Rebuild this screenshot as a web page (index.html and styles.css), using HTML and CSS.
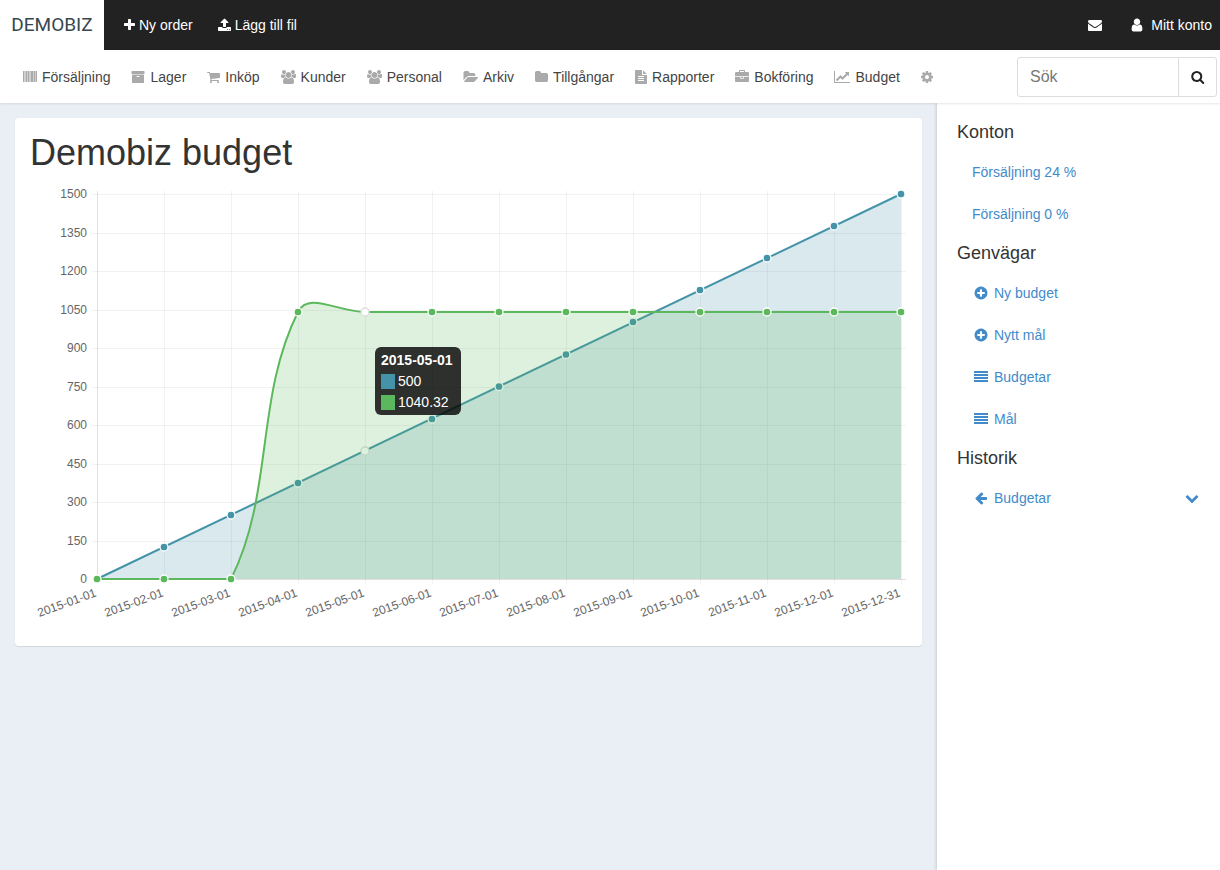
FILE: index.html
```html
<!DOCTYPE html>
<html lang="sv">
<head>
<meta charset="utf-8">
<meta name="viewport" content="width=device-width, initial-scale=1">
<title>Demobiz budget</title>
<link rel="stylesheet" href="styles.css">
</head>
<body>
<svg class="sprite" aria-hidden="true">
  <symbol id="plus" viewBox="192 0 1408 1792"><path d="M1600 736v192q0 40-28 68t-68 28h-416v416q0 40-28 68t-68 28h-192q-40 0-68-28t-28-68v-416h-416q-40 0-68-28t-28-68v-192q0-40 28-68t68-28h416v-416q0-40 28-68t68-28h192q40 0 68 28t28 68v416h416q40 0 68 28t28 68z"/></symbol>
  <symbol id="upload" viewBox="64 0 1664 1792"><path d="M1344 1472q0-26-19-45t-45-19-45 19-19 45 19 45 45 19 45-19 19-45zm256 0q0-26-19-45t-45-19-45 19-19 45 19 45 45 19 45-19 19-45zm128-224v320q0 40-28 68t-68 28h-1472q-40 0-68-28t-28-68v-320q0-40 28-68t68-28h427q21 56 70.5 92t110.5 36h256q61 0 110.5-36t70.5-92h427q40 0 68 28t28 68zm-325-648q-17 40-59 40h-256v448q0 26-19 45t-45 19h-256q-26 0-45-19t-19-45v-448h-256q-42 0-59-40-17-39 14-69l448-448q18-19 45-19t45 19l448 448q31 30 14 69z"/></symbol>
  <symbol id="envelope" viewBox="0 0 1792 1792"><path d="M1792 710v794q0 66-47 113t-113 47h-1472q-66 0-113-47t-47-113v-794q44 49 101 87 362 246 497 345 57 42 92.5 65.5t94.5 48 110 24.5h2q51 0 110-24.5t94.5-48 92.5-65.5q170-123 498-345 57-39 100-87zm0-294q0 79-49 151t-122 123q-376 261-468 325-10 7-42.5 31t-54 38.5-52 32.5-57.5 27-50 9h-2q-23 0-50-9t-57.5-27-52-32.5-54-38.5-42.5-31q-91-64-262-182.5t-205-142.5q-62-42-117-115.5t-55-136.5q0-78 41.5-130t118.5-52h1472q65 0 112.5 47t47.5 113z"/></symbol>
  <symbol id="user" viewBox="224 64 1344 1664"><path d="M1536 1399q0 109-62.5 187t-150.5 78h-854q-88 0-150.5-78t-62.5-187q0-85 8.5-160.5t31.5-152 58.5-131 94-89 134.5-34.5q131 128 313 128t313-128q76 0 134.5 34.5t94 89 58.5 131 31.5 152 8.5 160.5zm-256-887q0 159-112.5 271.5t-271.5 112.5-271.5-112.5-112.5-271.5 112.5-271.5 271.5-112.5 271.5 112.5 112.5 271.5z"/></symbol>
  <symbol id="search" viewBox="64 0 1728 1792"><path d="M1216 832q0-185-131.5-316.5t-316.5-131.5-316.5 131.5-131.5 316.5 131.5 316.5 316.5 131.5 316.5-131.5 131.5-316.5zm512 832q0 52-38 90t-90 38q-54 0-90-38l-343-342q-179 124-399 124-143 0-273.5-55.5t-225-150-150-225-55.5-273.5 55.5-273.5 150-225 225-150 273.5-55.5 273.5 55.5 225 150 150 225 55.5 273.5q0 220-124 399l343 343q37 37 37 90z"/></symbol>
  <symbol id="barcode" viewBox="0 0 14 14"><path fill-opacity=".55" d="M0 1h14v11H0z"/><path d="M0 1h1v11H0zM3 1h1v11H3zM5 1h1v11H5zM8 1h2v11H8zM11 1h1v11h-1zM13 1h1v11h-1z"/></symbol>
  <symbol id="archive" viewBox="64 0 1664 1792"><path d="M1088 832q0-26-19-45t-45-19h-256q-26 0-45 19t-19 45 19 45 45 19h256q26 0 45-19t19-45zm576-192v960q0 26-19 45t-45 19h-1408q-26 0-45-19t-19-45v-960q0-26 19-45t45-19h1408q26 0 45 19t19 45zm64-448v256q0 26-19 45t-45 19h-1536q-26 0-45-19t-19-45v-256q0-26 19-45t45-19h1536q26 0 45 19t19 45z"/></symbol>
  <symbol id="cart" viewBox="64 0 1664 1792"><path d="M704 1536q0 52-38 90t-90 38-90-38-38-90 38-90 90-38 90 38 38 90zm896 0q0 52-38 90t-90 38-90-38-38-90 38-90 90-38 90 38 38 90zm128-1088v512q0 24-16.5 42.5t-40.5 21.5l-1044 122q13 60 13 70 0 16-24 64h920q26 0 45 19t19 45-19 45-45 19h-1024q-26 0-45-19t-19-45q0-11 8-31.5t16-36 21.5-40 15.5-29.5l-177-823h-204q-26 0-45-19t-19-45 19-45 45-19h256q16 0 28.5 6.5t19.5 15.5 13 24.5 8 26 5.5 29.5 4.5 26h1201q26 0 45 19t19 45z"/></symbol>
  <symbol id="users" viewBox="-64 0 1920 1792"><path d="M529 896q-162 5-265 128h-134q-82 0-138-40.5t-56-118.5q0-353 124-353 6 0 43.5 21t97.5 42.5 119 21.5q67 0 133-23-5 37-5 66 0 159 90 289zm1071 637q0 120-73 189.5t-194 69.5h-874q-121 0-194-69.5t-73-189.5q0-53 3.5-103.5t14-109 26.5-108.5 43-97.5 62-81 85.5-53.5 111.5-20q10 0 43 21.5t73 48 107 48 135 21.5 135-21.5 107-48 73-48 43-21.5q61 0 111.5 20t85.5 53.5 62 81 43 97.5 26.5 108.5 14 109 3.5 103.5zm-1024-1277q0 106-75 181t-181 75-181-75-75-181 75-181 181-75 181 75 75 181zm704 384q0 159-112.5 271.5t-271.5 112.5-271.5-112.5-112.5-271.5 112.5-271.5 271.5-112.5 271.5 112.5 112.5 271.5zm576 225q0 78-56 118.5t-138 40.5h-134q-103-123-265-128 90-130 90-289 0-29-5-66 66 23 133 23 59 0 119-21.5t97.5-42.5 43.5-21q124 0 124 353zm-128-609q0 106-75 181t-181 75-181-75-75-181 75-181 181-75 181 75 75 181z"/></symbol>
  <symbol id="folder-open" viewBox="0 0 1943 1792"><path d="M1943 952q0 31-31 66l-336 396q-43 51-120.5 86.5t-143.5 35.5h-1088q-34 0-60.5-13t-26.5-43q0-31 31-66l336-396q43-51 120.5-86.5t143.5-35.5h1088q34 0 60.5 13t26.5 43zm-343-344v160h-832q-94 0-197 47.5t-164 119.5l-337 396-5 6q0-4-.5-12.5t-.5-12.5v-960q0-92 66-158t158-66h320q92 0 158 66t66 158v32h544q92 0 158 66t66 158z"/></symbol>
  <symbol id="folder" viewBox="64 0 1664 1792"><path d="M1728 608v704q0 92-66 158t-158 66h-1216q-92 0-158-66t-66-158v-960q0-92 66-158t158-66h320q92 0 158 66t66 158v32h672q92 0 158 66t66 158z"/></symbol>
  <symbol id="file" viewBox="128 0 1536 1792"><path d="M1596 476q14 14 28 36h-472v-472q22 14 36 28zm-476 164h544v1056q0 40-28 68t-68 28h-1344q-40 0-68-28t-28-68v-1600q0-40 28-68t68-28h800v544q0 40 28 68t68 28zm160 736v-64q0-14-9-23t-23-9h-704q-14 0-23 9t-9 23v64q0 14 9 23t23 9h704q14 0 23-9t9-23zm0-256v-64q0-14-9-23t-23-9h-704q-14 0-23 9t-9 23v64q0 14 9 23t23 9h704q14 0 23-9t9-23zm0-256v-64q0-14-9-23t-23-9h-704q-14 0-23 9t-9 23v64q0 14 9 23t23 9h704q14 0 23-9t9-23z"/></symbol>
  <symbol id="briefcase" viewBox="0 0 1792 1792"><path d="M640 256h512v-128h-512v128zm1152 640v480q0 66-47 113t-113 47h-1472q-66 0-113-47t-47-113v-480h672v160q0 26 19 45t45 19h320q26 0 45-19t19-45v-160h672zm-768 0v128h-256v-128h256zm768-480v384h-1792v-384q0-66 47-113t113-47h352v-160q0-40 28-68t68-28h576q40 0 68 28t28 68v160h352q66 0 113 47t47 113z"/></symbol>
  <symbol id="line-chart" viewBox="0 0 2048 1792"><path d="M2048 1536v128h-2048v-1536h128v1408h1920zm-128-1248v435q0 21-19.500 29.500t-35.500-7.500l-121-121-633 633q-10 10-23 10t-23-10l-233-233-416 416-192-192 585-585q10-10 23-10t23 10l233 233 464-464-121-121q-16-16-7.500-35.500t29.500-19.500h435q14 0 23 9t9 23z"/></symbol>
  <symbol id="cog" viewBox="128 64 1536 1664"><path d="M1152 896q0-106-75-181t-181-75-181 75-75 181 75 181 181 75 181-75 75-181zm512-109v222q0 12-8 23t-20 13l-185 28q-19 54-39 91 35 50 107 138 10 12 10 25t-9 23q-27 37-99 108t-94 71q-12 0-26-9l-138-108q-44 23-91 38-16 136-29 186-7 28-36 28h-222q-14 0-24.500-8.500t-11.500-21.500l-28-184q-49-16-90-37l-141 107q-10 9-25 9-14 0-25-11-126-114-165-168-7-10-7-23 0-12 8-23 15-21 51-66.500t54-70.500q-27-50-41-99l-183-27q-13-2-21-12.500t-8-23.500v-222q0-12 8-23t19-13l186-28q14-46 39-92-40-57-107-138-10-12-10-24 0-10 9-23 26-36 98.500-107.500t94.500-71.500q13 0 26 10l138 107q44-23 91-38 16-136 29-186 7-28 36-28h222q14 0 24.500 8.500t11.500 21.500l28 184q49 16 90 37l142-107q9-9 24-9 13 0 25 10 129 119 165 170 7 8 7 22 0 12-8 23-15 21-51 66.500t-54 70.500q26 50 41 98l183 28q13 2 21 12.500t8 23.500z"/></symbol>
  <symbol id="plus-circle" viewBox="64 64 1664 1664"><path d="M1344 960v-128q0-26-19-45t-45-19h-256v-256q0-26-19-45t-45-19h-128q-26 0-45 19t-19 45v256h-256q-26 0-45 19t-19 45v128q0 26 19 45t45 19h256v256q0 26 19 45t45 19h128q26 0 45-19t19-45v-256h256q26 0 45-19t19-45zm320-64q0 209-103 385.500t-279.500 279.500-385.500 103-385.500-103-279.500-279.500-103-385.500 103-385.500 279.500-279.500 385.500-103 385.500 103 279.500 279.500 103 385.500z"/></symbol>
  <symbol id="list" viewBox="0 0 14 14"><path d="M0 1h14v2H0zM0 4h14v2H0zM0 7h14v2H0zM0 10h14v2H0z"/></symbol>
  <symbol id="arrow-left" viewBox="0 0 1792 1792"><path d="M1664 896v128q0 53-32.500 90.500t-84.500 37.500h-704l293 294q38 36 38 90t-38 90l-75 76q-37 37-90 37-52 0-91-37l-651-652q-37-37-37-90 0-52 37-91l651-650q38-38 91-38 52 0 90 38l75 74q38 38 38 91t-38 91l-293 293h704q52 0 84.500 37.500t32.500 90.500z"/></symbol>
  <symbol id="chevron-down" viewBox="0 0 1792 1792"><path d="M1683 808l-742 741q-19 19-45 19t-45-19l-742-741q-19-19-19-45.500t19-45.500l166-165q19-19 45-19t45 19l531 531 531-531q19-19 45-19t45 19l166 165q19 19 19 45.500t-19 45.500z"/></symbol>
</svg>

<header class="topbar">
  <a class="logo" href="#">DEMOBIZ</a>
  <nav class="topbar-links">
    <a href="#"><svg class="icon w11"><use href="#plus"/></svg>Ny order</a>
    <a href="#"><svg class="icon w13"><use href="#upload"/></svg>Lägg till fil</a>
  </nav>
  <nav class="topbar-account">
    <a href="#" aria-label="Meddelanden"><svg class="icon w14"><use href="#envelope"/></svg></a>
    <a class="account" href="#"><svg class="icon w12"><use href="#user"/></svg>Mitt konto</a>
  </nav>
</header>

<div class="menubar">
  <nav class="menu">
    <a href="#"><svg class="icon w14"><use href="#barcode"/></svg>Försäljning</a>
    <a href="#"><svg class="icon w14"><use href="#archive"/></svg>Lager</a>
    <a href="#"><svg class="icon w13"><use href="#cart"/></svg>Inköp</a>
    <a href="#"><svg class="icon w15"><use href="#users"/></svg>Kunder</a>
    <a href="#"><svg class="icon w15"><use href="#users"/></svg>Personal</a>
    <a href="#"><svg class="icon w15"><use href="#folder-open"/></svg>Arkiv</a>
    <a href="#"><svg class="icon w13"><use href="#folder"/></svg>Tillgångar</a>
    <a href="#"><svg class="icon w12"><use href="#file"/></svg>Rapporter</a>
    <a href="#"><svg class="icon w14"><use href="#briefcase"/></svg>Bokföring</a>
    <a href="#"><svg class="icon w16"><use href="#line-chart"/></svg>Budget</a>
    <a href="#" aria-label="Inställningar"><svg class="icon w12"><use href="#cog"/></svg></a>
  </nav>
  <form class="search">
    <input type="search" placeholder="Sök" aria-label="Sök">
    <button type="button" aria-label="Sök"><svg class="icon w14"><use href="#search"/></svg></button>
  </form>
</div>

<div class="page">
  <main class="content">
    <section class="card">
      <h1>Demobiz budget</h1>
      <svg class="chart" viewBox="0 0 877 446" role="img" aria-label="Budgetdiagram">
        <path class="grid" d="M62 9.500H876M62 48.500H876M62 86.500H876M62 125.500H876M62 163.500H876M62 202.500H876M62 240.500H876M62 279.500H876M62 317.500H876M62 356.500H876M134.500 6V399M201.500 6V399M268.500 6V399M335.500 6V399M402.500 6V399M469.500 6V399M536.500 6V399M603.500 6V399M670.500 6V399M737.500 6V399M804.500 6V399M871.500 6V399"/>
        <path class="axis" d="M67.500 6V399M62 394.500H876"/>
        <g class="y-labels">
          <text x="57" y="13">1500</text><text x="57" y="52">1350</text><text x="57" y="90">1200</text>
          <text x="57" y="129">1050</text><text x="57" y="167">900</text><text x="57" y="206">750</text>
          <text x="57" y="244">600</text><text x="57" y="283">450</text><text x="57" y="321">300</text>
          <text x="57" y="360">150</text><text x="57" y="398">0</text>
        </g>
        <g class="x-labels">
          <text transform="translate(67 411) rotate(-20)">2015-01-01</text>
          <text transform="translate(134 411) rotate(-20)">2015-02-01</text>
          <text transform="translate(201 411) rotate(-20)">2015-03-01</text>
          <text transform="translate(268 411) rotate(-20)">2015-04-01</text>
          <text transform="translate(335 411) rotate(-20)">2015-05-01</text>
          <text transform="translate(402 411) rotate(-20)">2015-06-01</text>
          <text transform="translate(469 411) rotate(-20)">2015-07-01</text>
          <text transform="translate(536 411) rotate(-20)">2015-08-01</text>
          <text transform="translate(603 411) rotate(-20)">2015-09-01</text>
          <text transform="translate(670 411) rotate(-20)">2015-10-01</text>
          <text transform="translate(737 411) rotate(-20)">2015-11-01</text>
          <text transform="translate(804 411) rotate(-20)">2015-12-01</text>
          <text transform="translate(871 411) rotate(-20)">2015-12-31</text>
        </g>
        <path class="area-blue" d="M67 394L871 9V394Z"/>
        <path class="line-blue" d="M67 394L871 9"/>
        <g class="dots-blue">
          <circle cx="67" cy="394" r="4"/><circle cx="134" cy="362" r="4"/><circle cx="201" cy="330" r="4"/>
          <circle cx="268" cy="298" r="4"/><circle class="hot" cx="335" cy="266" r="4"/><circle cx="402" cy="234" r="4"/>
          <circle cx="469" cy="201.500" r="4"/><circle cx="536" cy="169.500" r="4"/><circle cx="603" cy="137" r="4"/>
          <circle cx="670" cy="105" r="4"/><circle cx="737" cy="73" r="4"/><circle cx="804" cy="41" r="4"/>
          <circle cx="871" cy="9" r="4"/>
        </g>
        <path class="area-green" d="M67 394H201C244 308 225 213 268 127C278 106 308 127 335 127H871V394Z"/>
        <path class="line-green" d="M67 394H201C244 308 225 213 268 127C278 106 308 127 335 127H871"/>
        <g class="dots-green">
          <circle cx="67" cy="394" r="4"/><circle cx="134" cy="394" r="4"/><circle cx="201" cy="394" r="4"/>
          <circle cx="268" cy="127" r="4"/><circle class="hot" cx="335" cy="127" r="4"/><circle cx="402" cy="127" r="4"/>
          <circle cx="469" cy="127" r="4"/><circle cx="536" cy="127" r="4"/><circle cx="603" cy="127" r="4"/>
          <circle cx="670" cy="127" r="4"/><circle cx="737" cy="127" r="4"/><circle cx="804" cy="127" r="4"/>
          <circle cx="871" cy="127" r="4"/>
        </g>
        <g class="tip">
          <rect class="tip-box" x="345" y="162" width="86" height="68" rx="6"/>
          <text class="tip-title" x="351" y="180">2015-05-01</text>
          <rect class="key-blue" x="351" y="189" width="14" height="15"/>
          <text x="368" y="201">500</text>
          <rect class="key-green" x="351" y="210" width="14" height="15"/>
          <text x="368" y="222">1040.32</text>
        </g>
      </svg>
    </section>
  </main>

  <aside class="sidebar">
    <h2>Konton</h2>
    <ul>
      <li><a href="#">Försäljning 24 %</a></li>
      <li><a href="#">Försäljning 0 %</a></li>
    </ul>
    <h2>Genvägar</h2>
    <ul>
      <li><a href="#"><svg class="icon fixed"><use href="#plus-circle"/></svg>Ny budget</a></li>
      <li><a href="#"><svg class="icon fixed"><use href="#plus-circle"/></svg>Nytt mål</a></li>
      <li><a href="#"><svg class="icon fixed"><use href="#list"/></svg>Budgetar</a></li>
      <li><a href="#"><svg class="icon fixed"><use href="#list"/></svg>Mål</a></li>
    </ul>
    <h2>Historik</h2>
    <ul>
      <li><a href="#"><svg class="icon fixed"><use href="#arrow-left"/></svg>Budgetar<svg class="icon w14 toggle"><use href="#chevron-down"/></svg></a></li>
    </ul>
  </aside>
</div>
</body>
</html>
```
FILE: styles.css
```css
* {
  box-sizing: border-box;
}

body {
  display: flex;
  flex-direction: column;
  min-height: 100vh;
  margin: 0;
  background: #eaeff6;
  color: #333;
  font: 14px/20px "Liberation Sans", Arial, sans-serif;
}

a {
  color: inherit;
  text-decoration: none;
}

.sprite {
  position: absolute;
  width: 0;
  height: 0;
}

.icon {
  flex: none;
  height: 14px;
  fill: currentColor;
}

.w11 { width: 11px; }
.w12 { width: 12px; }
.w13 { width: 13px; }
.w14 { width: 14px; }
.w15 { width: 15px; }
.w16 { width: 16px; }
.fixed { width: 18px; }

/* Top bar */
.topbar {
  display: flex;
  height: 50px;
  background: #222;
  color: #fff;
}

.topbar .logo {
  justify-content: center;
  width: 104px;
  background: #fff;
  color: #37474f;
  font: 400 19px/50px Roboto, "Liberation Sans", sans-serif;
}

.topbar-links,
.topbar-account,
.topbar a {
  display: flex;
  align-items: center;
}

.topbar-links {
  gap: 25px;
  padding-left: 20px;
}

.topbar-links a {
  gap: 4px;
}

.topbar-account {
  gap: 29px;
  margin-left: auto;
  padding-right: 8px;
}

.topbar .account {
  gap: 8px;
}

/* Menu bar */
.menubar {
  display: flex;
  align-items: center;
  justify-content: space-between;
  position: relative;
  height: 53px;
  padding: 0 3px 0 23px;
  background: #fff;
  box-shadow: 0 1px 2px rgba(0, 0, 0, .1);
}

.menu {
  display: flex;
  gap: 21px;
}

.menu a {
  display: flex;
  align-items: center;
  gap: 5px;
  color: #444;
}

.menu .icon {
  fill: #aaa;
}

.search {
  display: flex;
  width: 200px;
  height: 40px;
  border: 1px solid #ddd;
  border-radius: 3px;
}

.search input {
  flex: 1;
  min-width: 0;
  padding: 0 12px;
  border: 0;
  background: none;
  font: 16px/20px "Liberation Sans", Arial, sans-serif;
  appearance: none;
}

.search input::placeholder {
  color: #777;
}

.search button {
  display: flex;
  align-items: center;
  justify-content: center;
  width: 38px;
  padding: 0;
  border: 0;
  border-left: 1px solid #ddd;
  background: none;
  color: #222;
}

/* Page */
.page {
  display: flex;
  flex: 1;
}

.content {
  flex: 1;
  min-width: 0;
  padding: 15px;
}

.card {
  padding: 15px;
  border-radius: 4px;
  background: #fff;
  box-shadow: 0 1px 1px rgba(0, 0, 0, .1);
}

.card h1 {
  margin: 0 0 12px;
  font-size: 36px;
  font-weight: 400;
  line-height: 40px;
}

/* Chart */
.chart {
  display: block;
  width: 100%;
  font-size: 12px;
}

.grid,
.axis {
  fill: none;
  stroke: rgba(0, 0, 0, .05);
}

.axis {
  stroke: rgba(0, 0, 0, .12);
}

.y-labels,
.x-labels {
  fill: #666;
  text-anchor: end;
}

.area-blue {
  fill: rgba(68, 147, 168, .2);
}

.area-green {
  fill: rgba(92, 184, 92, .2);
}

.line-blue,
.line-green {
  fill: none;
  stroke: #4493a8;
  stroke-width: 2;
}

.line-green {
  stroke: #5cb85c;
}

.dots-blue,
.dots-green {
  fill: #4493a8;
  stroke: #fff;
  stroke-width: 1.3;
}

.dots-green {
  fill: #5cb85c;
}

.hot {
  fill: #fff;
  stroke: #dcdcdc;
}

.tip {
  fill: #fff;
  font-size: 14px;
}

.tip-box {
  fill: rgba(0, 0, 0, .8);
}

.tip-title {
  font-weight: 700;
}

.key-blue {
  fill: #4493a8;
}

.key-green {
  fill: #5cb85c;
}

/* Sidebar */
.sidebar {
  flex: 0 0 283px;
  padding: 10px 6px 0 20px;
  background: #fff;
  box-shadow: -1px 0 3px rgba(0, 0, 0, .15);
}

.sidebar h2 {
  margin: 9px 0 10px;
  font-size: 18px;
  font-weight: 400;
  line-height: 20px;
}

.sidebar ul {
  display: flex;
  flex-direction: column;
  gap: 2px;
  margin: 0;
  padding: 0;
  list-style: none;
}

.sidebar a {
  display: flex;
  align-items: center;
  gap: 4px;
  padding: 10px 15px;
  color: #428bca;
}

.toggle {
  margin-left: auto;
}
```
